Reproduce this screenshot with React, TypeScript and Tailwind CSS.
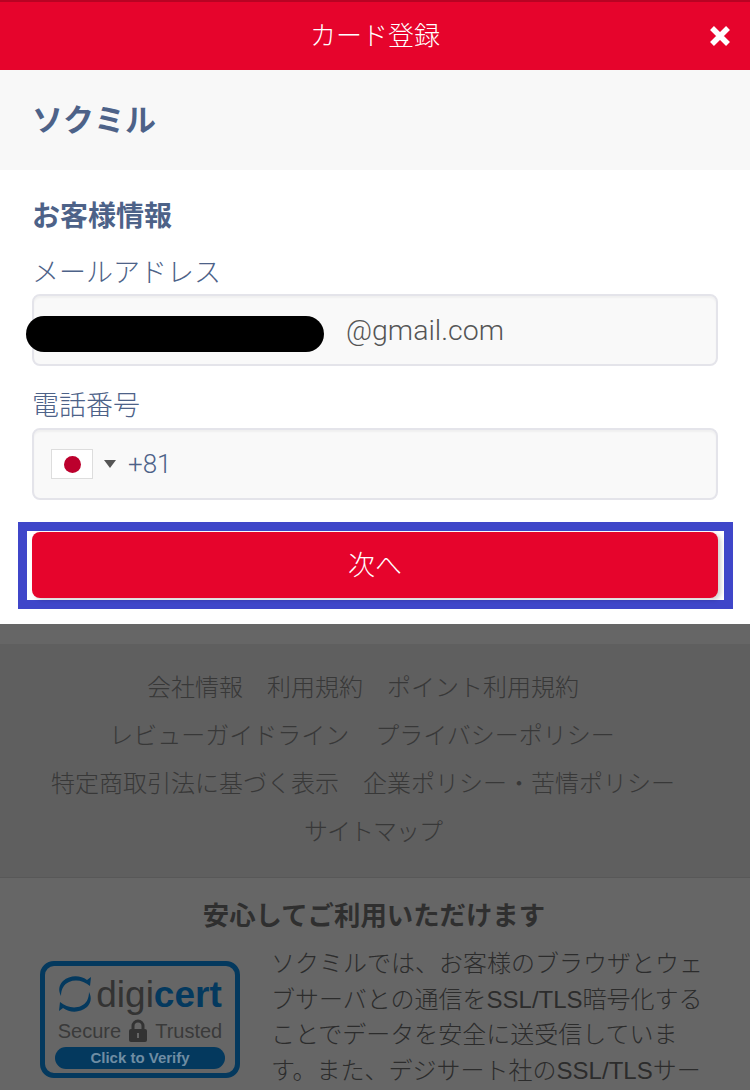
const jp = '"Liberation Sans", "Noto Sans CJK JP", sans-serif';
export default function App() {
  return (
    <div className="w-[750px] h-[1090px] overflow-hidden bg-[#666666] flex flex-col font-light" style={{ fontFamily: jp }}>
      <header className="relative h-[70px] shrink-0 bg-[#e6042c] border-t-2 border-[#b80323] flex items-center justify-center text-white text-[26px] pt-[1px]">
        カード登録
        <svg className="absolute right-[20px] top-[24px]" width="20" height="20" viewBox="0 0 20 20"><path d="M2 2 L18 18 M18 2 L2 18" stroke="#fff" strokeWidth="5.5" /></svg>
      </header>
      <div className="h-[100px] shrink-0 bg-[#f8f8f8] flex items-center px-[32px] pt-[3px] text-[31px] font-bold text-[#4d6288]">ソクミル</div>
      <main className="h-[454px] shrink-0 bg-white px-[32px] flex flex-col relative">
        <div className="mt-[27px] h-[40px] text-[28px] font-bold text-[#4d6288] leading-[40px]">お客様情報</div>
        <div className="mt-[16px] h-[40px] text-[27px] text-[#4d6288] leading-[40px]">メールアドレス</div>
        <div className="mt-[1px] h-[72px] rounded-[8px] border-2 border-[#e4e4ea] bg-[#f9f9f9] shadow-[inset_0_2px_2px_rgba(0,0,0,0.04)] flex items-center font-[Roboto] text-[28.5px] text-[#555] pl-[312px] pt-[2px]">@gmail.com</div>
        <div className="absolute left-[26px] top-[146px] w-[298px] h-[36px] rounded-full bg-black" />
        <div className="mt-[20px] h-[40px] text-[27px] text-[#4d6288] leading-[40px]">電話番号</div>
        <div className="mt-[2px] h-[72px] rounded-[8px] border-2 border-[#e4e4ea] bg-[#f9f9f9] shadow-[inset_0_2px_2px_rgba(0,0,0,0.04)] flex items-center pl-[17px]">
          <div className="w-[42px] h-[30px] bg-white border border-[#ddd] flex items-center justify-center"><div className="w-[17px] h-[17px] rounded-full bg-[#bc002d]" /></div>
          <div className="ml-[11px] w-0 h-0 border-x-[6px] border-x-transparent border-t-[8px] border-t-[#555]" />
          <span className="ml-[12px] font-[Roboto] text-[26px] text-[#4d6288]">+81</span>
        </div>
        <div className="mt-[22px] -ml-[14px] w-[715px] h-[87px] border-[9px] border-[#3f46c9] bg-white pt-[1px] pl-[5px]">
          <div className="h-[66px] w-[686px] rounded-[8px] bg-[#e6042c] shadow-[3px_2px_4px_rgba(0,0,0,0.18)] flex items-center justify-center text-white text-[27px] pt-[2px]">次へ</div>
        </div>
      </main>
      <footer className="flex-1 text-[24px]">
        <div className="h-[20px]" />
        <nav className="h-[234px] bg-[#5f5f5f] border-b border-[#585858] flex flex-col items-center pt-[20px] leading-[48px] text-[#383838]">
          <div className="flex gap-[24px] pr-[24px]"><span>会社情報</span><span>利用規約</span><span>ポイント利用規約</span></div>
          <div className="flex gap-[26px] pr-[26px]"><span>レビューガイドライン</span><span>プライバシーポリシー</span></div>
          <div className="flex gap-[24px] pr-[24px]"><span>特定商取引法に基づく表示</span><span>企業ポリシー・苦情ポリシー</span></div>
          <div className="tracking-[-1px] pr-[4px]">サイトマップ</div>
        </nav>
        <section className="bg-[#666666]">
          <div className="text-center font-bold text-[26.4px] pt-[20px] leading-[36px] text-[#2f2f2f] pr-[2px]">安心してご利用いただけます</div>
          <div className="flex pl-[40px] pt-[12px]">
            <div className="w-[200px] h-[117px] shrink-0 mt-[15px] rounded-[14px] border-[5px] border-[#04395e] flex flex-col items-center">
              <div className="flex items-center h-[50px] text-[37px] leading-none mt-[3px] -ml-[2px]">
                <svg className="mr-[2px]" width="38" height="38" viewBox="0 0 38 38" fill="#04395e"><path d="M7 6 C14 0 24 0 31 5 L35 2 L34 11 C28 6 20 4 13 7 C8 9 5 14 5 21 C2 15 3 10 7 6 Z M31 32 C24 38 14 38 7 33 L3 36 L4 27 C10 32 18 34 25 31 C30 29 33 24 33 17 C36 23 35 28 31 32 Z" /></svg>
                <span className="text-[#333] font-normal">digi</span><span className="text-[#04395e] font-bold">cert</span>
              </div>
              <div className="flex items-center text-[20px] text-[#3a3a3a] leading-none gap-[7px] mt-[0px] font-normal">
                <span>Secure</span>
                <svg width="20" height="24" viewBox="0 0 20 24"><path d="M5 11 V7 A5 5 0 0 1 15 7 V11" fill="none" stroke="#333" strokeWidth="3" /><rect x="1" y="10" width="18" height="13" rx="2" fill="#333" /><rect x="9" y="14" width="2" height="5" fill="#666" /></svg>
                <span>Trusted</span>
              </div>
              <div className="mt-[4px] w-[170px] h-[22px] rounded-full bg-[#04395e] text-[#6f8da3] text-[15px] font-bold leading-[22px] text-center">Click to Verify</div>
            </div>
            <p className="ml-[31px] w-[442px] text-[24px] leading-[35.7px] text-[#2c2c2c]">ソクミルでは、お客様のブラウザとウェブサーバとの通信をSSL/TLS暗号化することでデータを安全に送受信しています。また、デジサート社のSSL/TLSサー</p>
          </div>
        </section>
      </footer>
    </div>
  );
}
